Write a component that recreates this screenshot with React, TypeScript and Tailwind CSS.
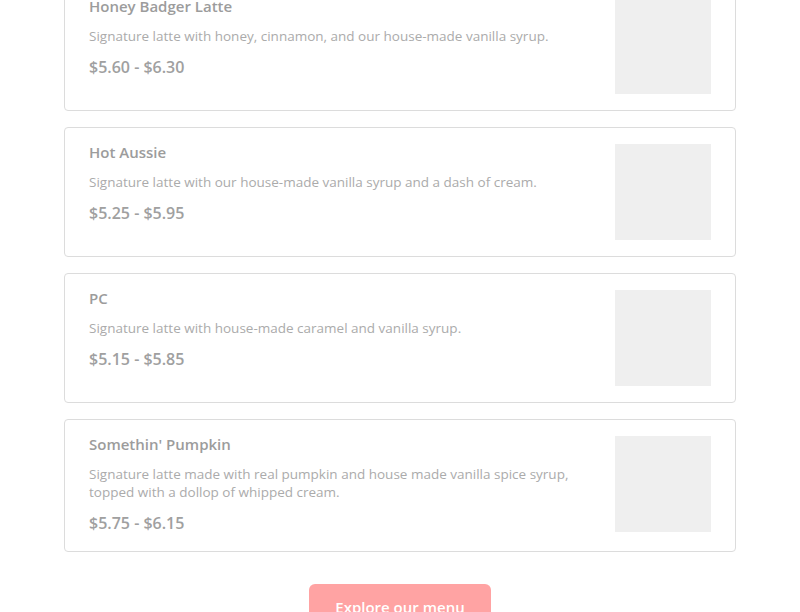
import React from "react";

interface Drink {
  name: string;
  description: string;
  price: string;
}

const drinks: Drink[] = [
  {
    name: "Honey Badger Latte",
    description: "Signature latte with honey, cinnamon, and our house-made vanilla syrup.",
    price: "$5.60 - $6.30",
  },
  {
    name: "Hot Aussie",
    description: "Signature latte with our house-made vanilla syrup and a dash of cream.",
    price: "$5.25 - $5.95",
  },
  {
    name: "PC",
    description: "Signature latte with house-made caramel and vanilla syrup.",
    price: "$5.15 - $5.85",
  },
  {
    name: "Somethin' Pumpkin",
    description:
      "Signature latte made with real pumpkin and house made vanilla spice syrup, topped with a dollop of whipped cream.",
    price: "$5.75 - $6.15",
  },
];

function DrinkCard({ drink }: { drink: Drink }) {
  return (
    <div className="flex items-start justify-between gap-6 rounded border border-[#dcdcdc] bg-white px-6 py-4">
      <div className="flex flex-col">
        <h3 className="text-[15px] font-semibold leading-4 text-[#9c9c9c]">{drink.name}</h3>
        <p className="mt-[13px] text-[13.5px] leading-[18px] text-[#ababab]">{drink.description}</p>
        <p className="mb-[2px] mt-3 text-[16px] font-semibold leading-5 text-[#a0a0a0]">{drink.price}</p>
      </div>
      <div className="h-24 w-24 shrink-0 bg-[#efefef]" />
    </div>
  );
}

export default function App() {
  return (
    <div
      className="h-[612px] overflow-hidden bg-white"
      style={{ fontFamily: '"Open Sans", "Liberation Sans", sans-serif' }}
    >
      <div className="mx-16 -mt-[19px] flex flex-col gap-4">
        {drinks.map((d) => (
          <DrinkCard key={d.name} drink={d} />
        ))}
      </div>
      <div className="mt-8 flex justify-center">
        <button className="h-12 w-[182px] rounded-md bg-[#ffa3a3] pb-[1px] text-[15px] font-semibold text-white">
          Explore our menu
        </button>
      </div>
    </div>
  );
}
